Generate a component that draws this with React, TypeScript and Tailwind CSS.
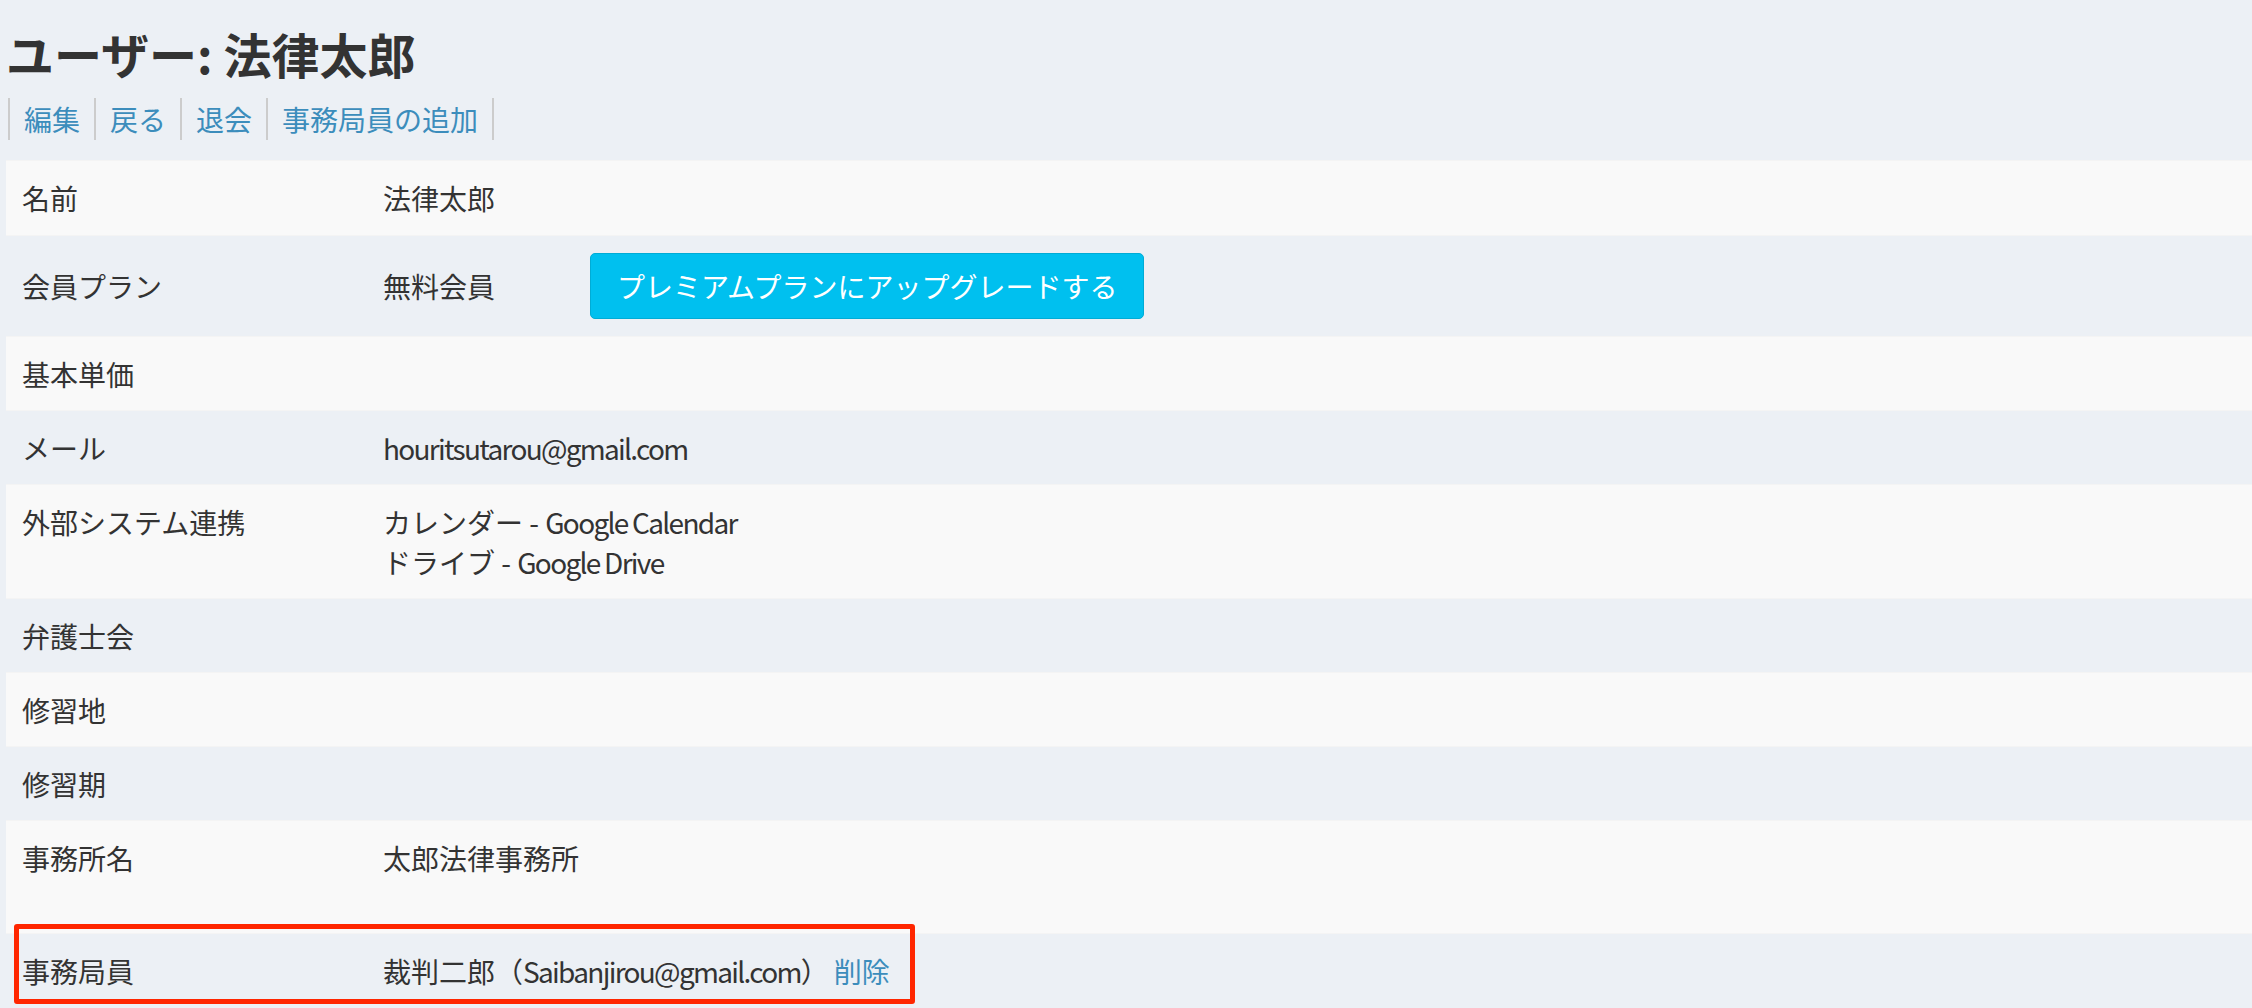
import React from "react";

const FONT = { fontFamily: '"Noto Sans CJK JP", "Noto Sans", sans-serif' };

function L({ children }: { children: React.ReactNode }) {
  return <span className="tracking-[-1.7px]">{children}</span>;
}

function TableRow({
  label,
  children,
  striped,
  minH = "",
  pb = "pb-4",
}: {
  label: string;
  children?: React.ReactNode;
  striped: boolean;
  minH?: string;
  pb?: string;
}) {
  return (
    <div
      className={`flex items-baseline border-t border-[#f4f4f4] ${
        striped ? "bg-[#f9f9f9]" : "bg-[#ecf0f5]"
      }`}
    >
      <div className={`w-[361px] shrink-0 pl-4 pr-4 pt-[17px] leading-[40px] ${pb}`}>
        {label}
      </div>
      <div className={`flex-1 pl-4 pr-4 pt-[17px] leading-[40px] ${pb} ${minH}`}>
        {children ?? "\u00a0"}
      </div>
    </div>
  );
}

export default function App() {
  return (
    <div
      className="min-h-[1008px] w-full overflow-hidden bg-[#ecf0f5] pl-[6px] text-[28px] text-[#333333]"
      style={FONT}
    >
      <h1 className="pt-[27px] text-[48px] font-bold leading-[53px] text-[#333333]">
        ユーザー: 法律太郎
      </h1>
      <nav className="mt-[18px] mb-[20px] flex h-[42px] pl-[2px]">
        {["編集", "戻る", "退会", "事務局員の追加"].map((t, i, arr) => (
          <a
            key={t}
            href="#"
            className={`flex items-center border-l-2 border-[#cccccc] px-[14px] leading-[40px] text-[#3c8dbc] ${
              i === arr.length - 1 ? "border-r-2" : ""
            }`}
          >
            {t}
          </a>
        ))}
      </nav>
      <div className="w-full">
        <TableRow label="名前" striped pb="pb-[17px]">
          法律太郎
        </TableRow>
        <TableRow label="会員プラン" striped={false} pb="pb-[17px]">
          無料会員
          <button
            type="button"
            className="ml-[95px] inline-block rounded-[5px] border border-[#00acd6] bg-[#00c0ef] px-[26px] py-3 align-baseline leading-[40px] text-white"
            style={FONT}
          >
            プレミアムプランにアップグレードする
          </button>
        </TableRow>
        <TableRow label="基本単価" striped />
        <TableRow label="メール" striped={false}>
          <L>houritsutarou@gmail.com</L>
        </TableRow>
        <TableRow label="外部システム連携" striped minH="min-h-[113px]">
          <div>
            カレンダー - <L>Google Calendar</L>
          </div>
          <div>
            ドライブ - <L>Google Drive</L>
          </div>
        </TableRow>
        <TableRow label="弁護士会" striped={false} />
        <TableRow label="修習地" striped />
        <TableRow label="修習期" striped={false} />
        <TableRow label="事務所名" striped minH="min-h-[112px]">
          太郎法律事務所
        </TableRow>
        <div className="relative">
          <TableRow label="事務局員" striped={false}>
            裁判二郎（<L>Saibanjirou@gmail.com</L>）
            <a href="#" className="ml-[5px] text-[#3c8dbc]">
              削除
            </a>
          </TableRow>
          <div className="pointer-events-none absolute left-[8px] top-[-9px] h-[80px] w-[901px] rounded-[3px] border-[5px] border-[#ff2600]" />
        </div>
      </div>
    </div>
  );
}
